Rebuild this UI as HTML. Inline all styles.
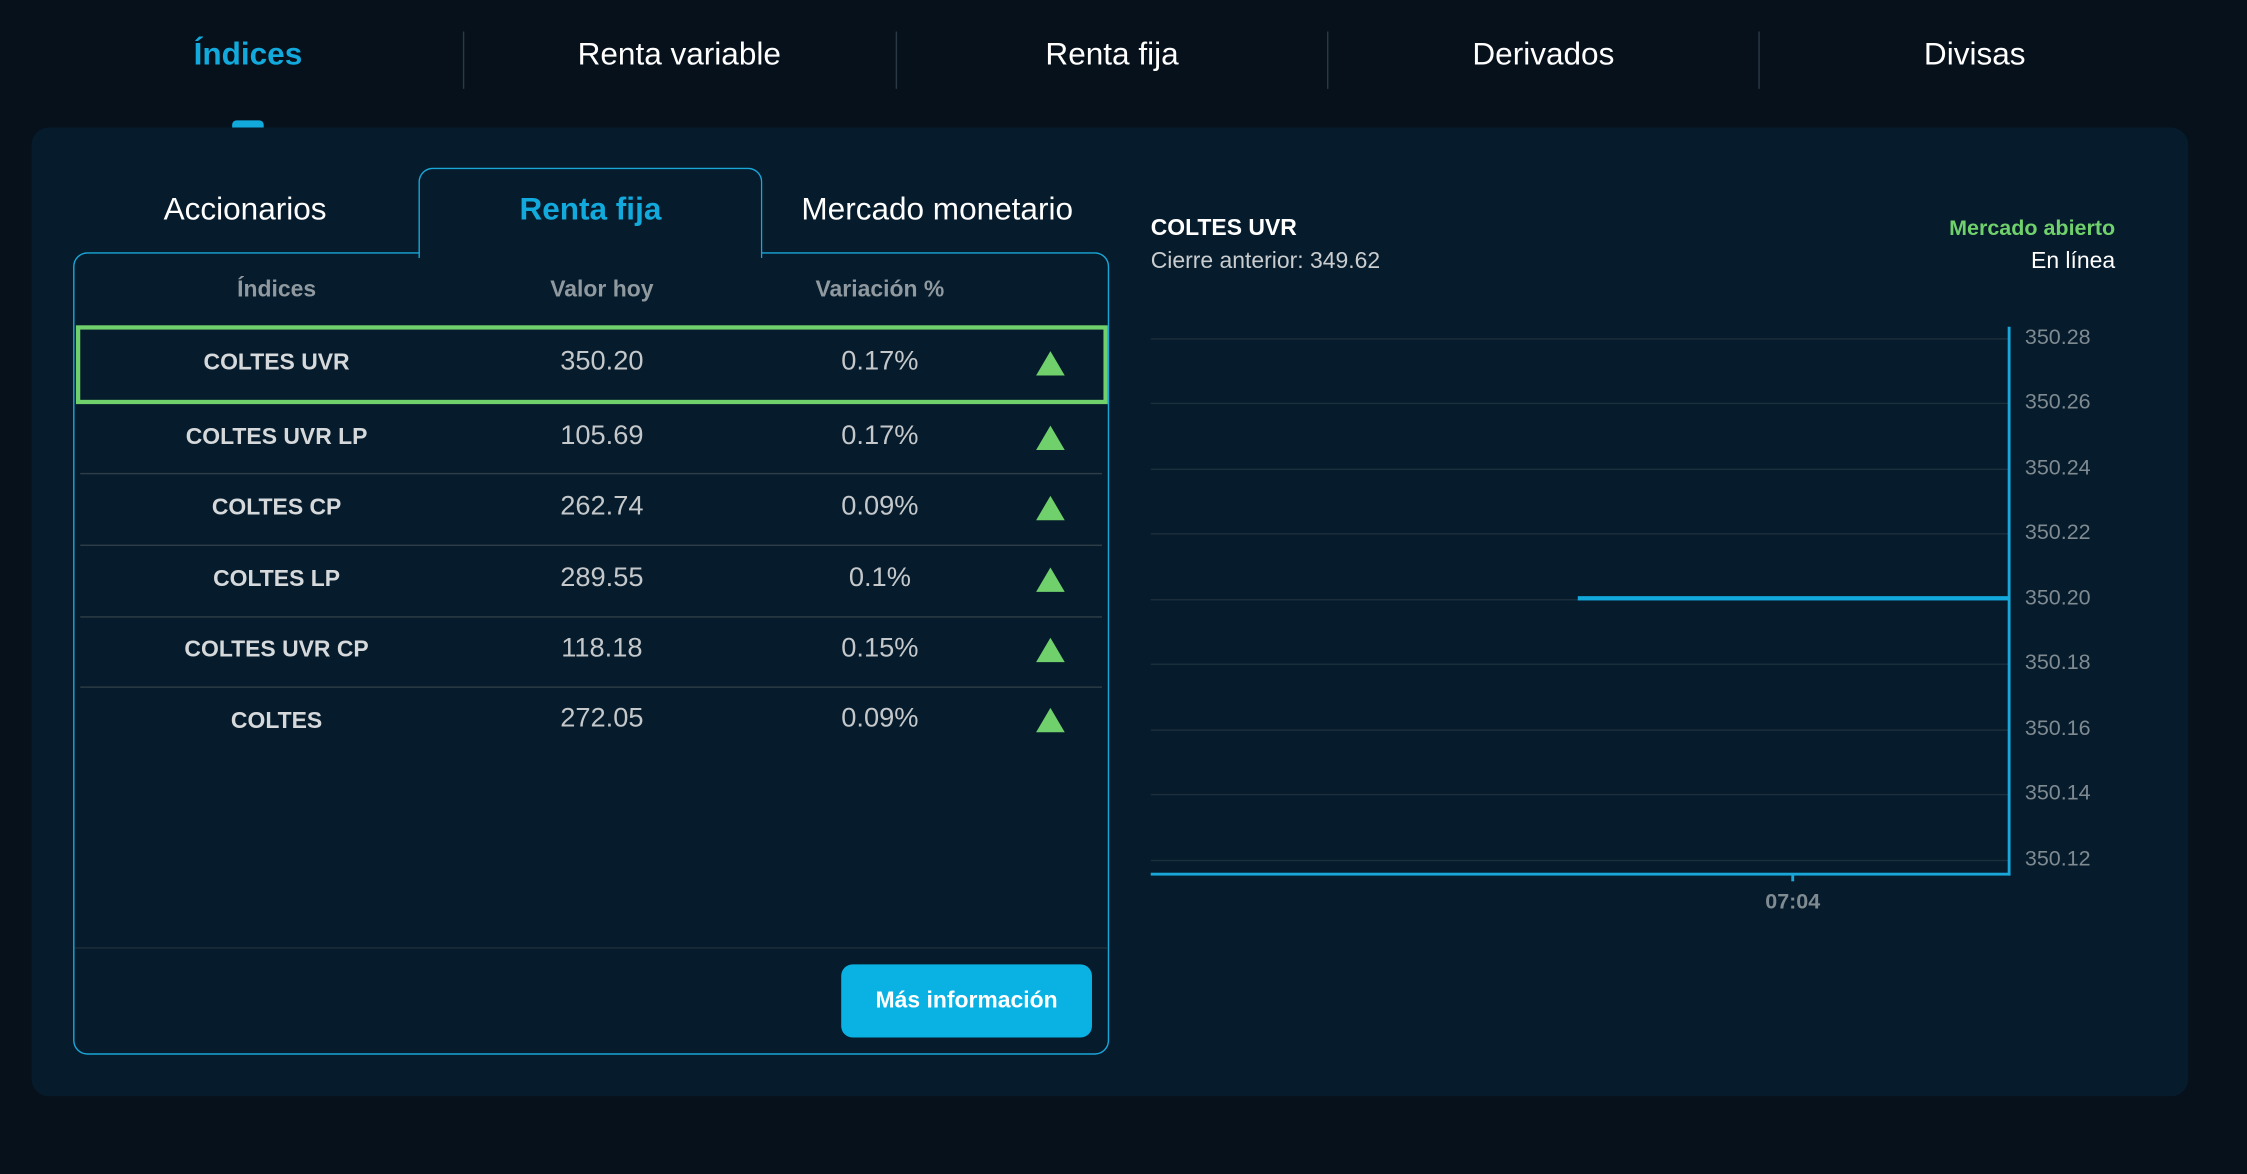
<!DOCTYPE html>
<html><head><meta charset="utf-8"><style>
html,body{margin:0;padding:0;background:#06111b;width:2247px;height:1174px;overflow:hidden}
#w{position:absolute;left:0;top:0;width:1568px;height:819px;transform:scale(1.43304);transform-origin:0 0;font-family:"Liberation Sans",sans-serif;color:#fff}
.a{position:absolute;white-space:nowrap}
.c{transform:translateX(-50%)}
.nav{top:25px;font-size:22px}
.div{position:absolute;top:22px;width:1px;height:40px;background:#2b3944}
.hd{top:194px;font-size:16px;font-weight:bold;color:#8f999f}
.n{font-size:16px;font-weight:bold;color:#d6d9db}
.v{font-size:19px;color:#c4c8cb}
.tri{position:absolute;width:0;height:0;border-left:10px solid transparent;border-right:10px solid transparent;border-bottom:17px solid #6fd06c}
.sep{position:absolute;left:56px;width:713px;height:1px;background:#2e3d47}
.g{position:absolute;left:803px;width:599px;height:1px;background:#1c2f3c}
.yl{position:absolute;left:1413px;font-size:15px;color:#7f8a91}
</style></head><body><div id="w">
<div class="a nav c" style="left:173px;color:#12a9dc;font-weight:bold">Índices</div>
<div class="a nav c" style="left:474px">Renta variable</div>
<div class="a nav c" style="left:776px">Renta fija</div>
<div class="a nav c" style="left:1077px">Derivados</div>
<div class="a nav c" style="left:1378px">Divisas</div>
<div class="div" style="left:323px"></div><div class="div" style="left:625px"></div><div class="div" style="left:926px"></div><div class="div" style="left:1227px"></div>
<div class="a" style="left:162px;top:84px;width:22px;height:6px;border-radius:3px 3px 0 0;background:#12a9dc"></div>
<div class="a" style="left:22px;top:89px;width:1505px;height:676px;border-radius:12px;background:#061b2b"></div>

<div class="a c" style="left:171px;top:133px;font-size:22px">Accionarios</div>
<div class="a c" style="left:654px;top:133px;font-size:22px">Mercado monetario</div>
<div class="a" style="left:51px;top:176px;width:721px;height:558px;border:1.5px solid #19a6d8;border-radius:10px"></div>
<div class="a" style="left:292px;top:117px;width:238px;height:62px;border:1.5px solid #19a6d8;border-bottom:none;border-radius:10px 10px 0 0;background:#061b2b"></div>
<div class="a c" style="left:412px;top:133px;font-size:22px;font-weight:bold;color:#12a9dc">Renta fija</div>

<div class="a hd c" style="left:193px">Índices</div>
<div class="a hd c" style="left:420px">Valor hoy</div>
<div class="a hd c" style="left:614px">Variación %</div>

<div class="a" style="left:53px;top:227px;width:714px;height:49px;border:3px solid #6fd06c"></div>
<div class="sep" style="top:330px"></div><div class="sep" style="top:380px"></div><div class="sep" style="top:430px"></div><div class="sep" style="top:479px"></div>
<div class="a" style="left:52px;top:661px;width:721px;height:1px;background:#1f2f3a"></div>

<div class="a n c" style="left:193px;top:245px">COLTES UVR</div><div class="a v c" style="left:420px;top:242px">350.20</div><div class="a v c" style="left:614px;top:242px">0.17%</div><div class="tri" style="left:723px;top:245px"></div>
<div class="a n c" style="left:193px;top:297px">COLTES UVR LP</div><div class="a v c" style="left:420px;top:294px">105.69</div><div class="a v c" style="left:614px;top:294px">0.17%</div><div class="tri" style="left:723px;top:297px"></div>
<div class="a n c" style="left:193px;top:346px">COLTES CP</div><div class="a v c" style="left:420px;top:343px">262.74</div><div class="a v c" style="left:614px;top:343px">0.09%</div><div class="tri" style="left:723px;top:346px"></div>
<div class="a n c" style="left:193px;top:396px">COLTES LP</div><div class="a v c" style="left:420px;top:393px">289.55</div><div class="a v c" style="left:614px;top:393px">0.1%</div><div class="tri" style="left:723px;top:396px"></div>
<div class="a n c" style="left:193px;top:445px">COLTES UVR CP</div><div class="a v c" style="left:420px;top:442px">118.18</div><div class="a v c" style="left:614px;top:442px">0.15%</div><div class="tri" style="left:723px;top:445px"></div>
<div class="a n c" style="left:193px;top:495px">COLTES</div><div class="a v c" style="left:420px;top:491px">272.05</div><div class="a v c" style="left:614px;top:491px">0.09%</div><div class="tri" style="left:723px;top:494px"></div>

<div class="a" style="left:587px;top:673px;width:175px;height:51px;border-radius:8px;background:#0ab2e4;text-align:center;line-height:51px;font-size:16px;font-weight:bold">Más información</div>

<div class="a" style="left:803px;top:151px;font-size:16px;font-weight:bold">COLTES UVR</div>
<div class="a" style="left:803px;top:174px;font-size:16px;color:#c9cdd0">Cierre anterior: 349.62</div>
<div class="a" style="right:92px;top:151px;font-size:15px;font-weight:bold;color:#6fd06c">Mercado abierto</div>
<div class="a" style="right:92px;top:174px;font-size:16px">En línea</div>

<div class="g" style="top:236px"></div><div class="g" style="top:281px"></div><div class="g" style="top:327px"></div><div class="g" style="top:372px"></div><div class="g" style="top:418px"></div><div class="g" style="top:463px"></div><div class="g" style="top:509px"></div><div class="g" style="top:554px"></div><div class="g" style="top:600px"></div>
<div class="a" style="left:1401px;top:228px;width:1.5px;height:383px;background:#19a6d8"></div>
<div class="a" style="left:803px;top:609px;width:600px;height:1.5px;background:#19a6d8"></div>
<div class="a" style="left:1250px;top:610px;width:1.5px;height:5px;background:#19a6d8"></div>
<div class="a" style="left:1101px;top:416px;width:301px;height:3px;background:#12a9dc"></div>
<div class="yl" style="top:227px">350.28</div><div class="yl" style="top:272px">350.26</div><div class="yl" style="top:318px">350.24</div><div class="yl" style="top:363px">350.22</div><div class="yl" style="top:409px">350.20</div><div class="yl" style="top:454px">350.18</div><div class="yl" style="top:500px">350.16</div><div class="yl" style="top:545px">350.14</div><div class="yl" style="top:591px">350.12</div>
<div class="a c" style="left:1251px;top:621px;font-size:15px;font-weight:bold;color:#7f8a91">07:04</div>
</div></body></html>
